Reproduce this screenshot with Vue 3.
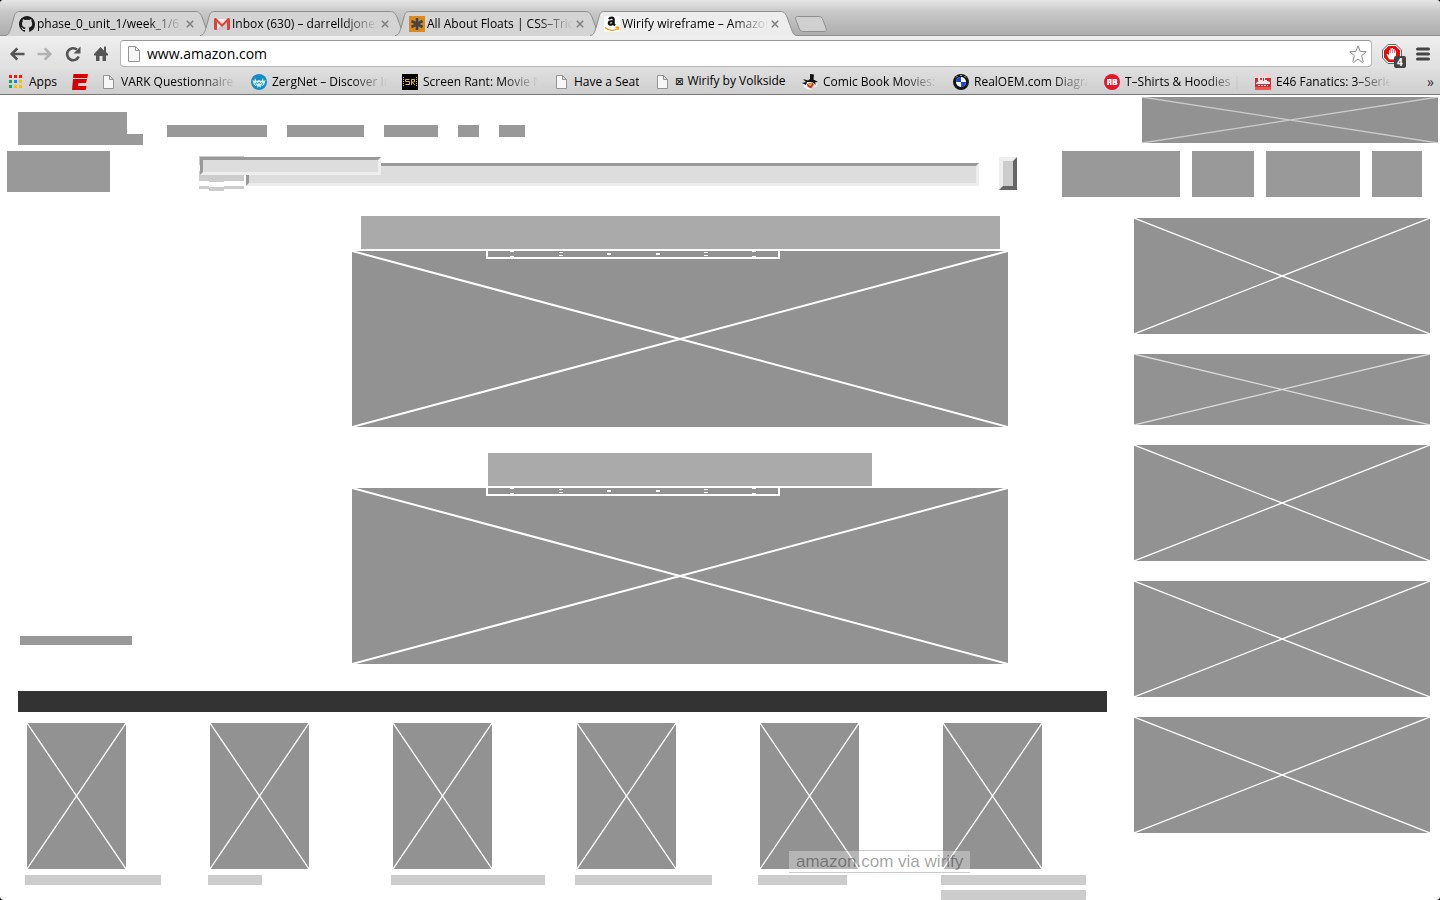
<script setup>
import { ref } from 'vue'

const tabs = [
  { icon: 'github', title: 'phase_0_unit_1/week_1/6_' },
  { icon: 'gmail', title: 'Inbox (630) – darrelldjones' },
  { icon: 'css', title: 'All About Floats | CSS–Tric' },
  { icon: 'amazon', title: 'Wirify wireframe – Amazon', active: true },
]

const bookmarks = [
  { icon: 'apps', title: 'Apps', width: 28 },
  { icon: 'espn', title: '', width: 0 },
  { icon: 'page', title: 'VARK Questionnaire', width: 115, fade: true },
  { icon: 'zerg', title: 'ZergNet – Discover In', width: 115, fade: true },
  { icon: 'sr', title: 'Screen Rant: Movie N', width: 115, fade: true },
  { icon: 'page', title: 'Have a Seat', width: 65 },
  { icon: 'page', title: 'Wirify by Volkside', width: 112, boxed: true },
  { icon: 'comic', title: 'Comic Book Movies:', width: 115, fade: true },
  { icon: 'bmw', title: 'RealOEM.com Diagra', width: 115, fade: true },
  { icon: 'rb', title: 'T–Shirts & Hoodies |', width: 115, fade: true },
  { icon: 'e46', title: 'E46 Fanatics: 3–Serie', width: 115, fade: true },
]

const url = ref('www.amazon.com')
const query = ref('')
const department = ref('')

const navLinks = [100, 77, 54, 21, 26]
const accountLinks = [118, 62, 94, 50]
const pagerDots = [25, 74, 122, 171, 219, 267]
const heroes = [
  { banner: 'wide' },
  { banner: 'narrow' },
]
const products = [
  [136],
  [54],
  [154],
  [137],
  [89],
  [145, 145],
]
const ads = ['tall', 'short', 'tall', 'tall', 'tall']
</script>

<template>
  <div class="window">
    <header class="chrome">
      <div class="tabstrip" role="tablist">
        <button
          v-for="t in tabs"
          :key="t.title"
          class="tab"
          :class="{ active: t.active }"
          role="tab"
          :aria-selected="!!t.active"
        >
          <svg class="tab-shape" viewBox="0 0 207 25" aria-hidden="true">
            <path class="tab-fill" d="M0 25C4 24 4 22 6 17L9 6C10 2 11 .5 15 .5H190C194 .5 195 2 197 6L201 17C203 22 203 24 207 25Z" />
            <path class="tab-line" d="M0 24.5C4 24 4 22 6 17L9 6C10 2 11 .5 15 .5H190C194 .5 195 2 197 6L201 17C203 22 203 24 207 24.5" />
          </svg>
          <svg v-if="t.icon === 'github'" class="icon" viewBox="0 0 16 16">
            <path fill="#1b1b1b" d="M8 0C3.600 0 0 3.600 0 8.100c0 3.600 2.300 6.600 5.500 7.700.4.100.5-.2.500-.4v-1.500c-2.200.5-2.700-1-2.700-1-.4-.9-.9-1.200-.9-1.200-.7-.5.100-.5.100-.5.800.1 1.200.8 1.200.8.700 1.300 1.900.9 2.400.7.100-.5.300-.9.500-1.100C4.800 11.400 3 10.700 3 7.600c0-.9.300-1.600.8-2.200-.1-.2-.4-1 .1-2.100 0 0 .7-.2 2.200.8a7.600 7.600 0 0 1 4 0c1.500-1 2.200-.8 2.200-.8.4 1.100.2 1.900.1 2.100.5.600.8 1.300.8 2.200 0 3.100-1.900 3.800-3.700 4 .3.200.6.700.6 1.500v2.300c0 .2.100.5.500.4A8.100 8.100 0 0 0 16 8.100C16 3.600 12.400 0 8 0Z" />
          </svg>
          <svg v-else-if="t.icon === 'gmail'" class="icon" viewBox="0 0 16 16">
            <path fill="#eee" d="M1 3h14v11H1z" />
            <path fill="#ccc" d="M3 14 8 8l5 6zM13 5v9l-4-5z" />
            <path fill="#d9453a" d="M1 2h1l6 6 6-6h1l1 1v10l-1 1h-2V6L8 11 3 6v8H1l-1-1V3z" />
          </svg>
          <svg v-else-if="t.icon === 'css'" class="icon" viewBox="0 0 16 16">
            <path fill="#dc8a1d" d="M0 0h16v16H0z" />
            <path stroke="#444" stroke-width="2.600" d="M8 2v12M2.500 5l11 6M13.500 5l-11 6" />
          </svg>
          <svg v-else class="icon" viewBox="0 0 16 16">
            <rect width="16" height="16" rx="2" fill="#fff" />
            <path fill="none" stroke="#111" stroke-width="2.200" d="M5 3.300C6 1 10 1 9.700 3.600V8L11 9.500M9.500 5C6 4.800 4.800 5.800 4.800 7.200c0 2.200 4 2 4.800-.5" />
            <path fill="none" stroke="#f90" stroke-width="1.500" d="M1 11.500c4 3.600 9 3.600 12.500 1M11.500 11.300c3-.8 3.500 0 2.200 2.600" />
          </svg>
          <span class="tab-title fade">{{ t.title }}</span>
          <svg class="close" viewBox="0 0 8 8"><path d="M.8.8l6.400 6.400M7.200.8.8 7.200" /></svg>
        </button>
        <button class="new-tab" aria-label="New tab">
          <svg viewBox="0 0 34 16"><path d="M3.500.5H24C27 .5 28 1 29 4l3 8c.8 2 0 3.500-2 3.500H10C7 15.500 6 15 5 12L2 4C1 2 1.500.5 3.500.5Z" /></svg>
        </button>
      </div>

      <div class="toolbar">
        <button class="tool" aria-label="Back">
          <svg viewBox="0 0 16 16"><path class="stroke" d="M15.500 8H4M8.300 2.300 2.700 8l5.600 5.700" /></svg>
        </button>
        <button class="tool pale" aria-label="Forward">
          <svg viewBox="0 0 16 16"><path class="stroke" d="M.5 8H12M7.700 2.300 13.300 8l-5.600 5.700" /></svg>
        </button>
        <button class="tool" aria-label="Reload">
          <svg viewBox="0 0 16 16"><path class="stroke" d="M13.700 10.500A6 6 0 1 1 12 3.600" /><path class="solid" d="M15.500.5v7H8.500z" /></svg>
        </button>
        <button class="tool" aria-label="Home">
          <svg viewBox="0 0 16 16"><path class="solid" d="M7.500 1 1 8v1.500h2V15h3.500v-5h3v5H13V9.500h2V8l-2-2V.5h-2v4z" /></svg>
        </button>
        <div class="omnibox">
          <svg class="doc" viewBox="0 0 12 16"><path d="M.5.500h7l4 4v11H.5zM7.500.500v4h4" /></svg>
          <input v-model="url" aria-label="Address" class="address" type="text" />
          <svg class="star" viewBox="0 0 18 18"><path d="m9 .8 2.200 5.600 6 .4-4.600 3.900 1.600 6c-.2.800-.9.800-1.500.3L9 14l-3.700 3c-.6.500-1.300.5-1.500-.3l1.600-6L.8 6.800l6-.4z" /></svg>
        </div>
        <button class="blocker" aria-label="Blocked items">
          <svg viewBox="0 0 26 26">
            <path fill="#fff" stroke="#666" d="M7 1.500h8l5.500 5.500v8L15 20.500H7L1.500 15V7z" />
            <path fill="#e40b0b" d="M7.500 3h7L19 7.500v7L14.500 19h-7L3 14.500v-7z" />
            <path fill="#fff" d="M8 16 5.500 11.500l1-.8L8 12V7h1.500V5.500H11V5h1v1h1.500v1.500H15V13l-1.500 3.500h-5z" />
            <path stroke="#e40b0b" stroke-width=".5" d="M9.500 7v3M11.500 6v4M13.500 7v3" />
            <rect x="13" y="13" width="12" height="12" rx="2" fill="#444" />
            <text x="16" y="23" fill="#fff" font-size="10" font-weight="700">4</text>
          </svg>
        </button>
        <button class="menu" aria-label="Menu">
          <svg viewBox="0 0 14 14"><path d="M1.500 2h11M1.500 7h11M1.500 12h11" /></svg>
        </button>
      </div>

      <nav class="bookmarks" aria-label="Bookmarks">
        <a v-for="b in bookmarks" :key="b.icon + b.title" href="#" class="bookmark" :class="b.icon">
          <svg v-if="b.icon === 'apps'" class="icon" viewBox="0 0 16 16">
            <path fill="#f31414" d="M1 1h3v3H1zM6 1h3v3H6zM11 1h3v3h-3z" />
            <path fill="#0ca65a" d="M1 6h3v3H1zM1 11h3v3H1z" />
            <path fill="#1483f5" d="M6 6h3v3H6z" />
            <path fill="#fb0" d="M11 6h3v3h-3zM6 11h3v3H6zM11 11h3v3h-3z" />
          </svg>
          <svg v-else-if="b.icon === 'espn'" class="icon" viewBox="0 0 16 16">
            <path fill="#d60000" d="M1.500 0H16l-.7 4H1zM1 5h14l-1 4H6.500L6 12h8.500l-.7 4H0z" />
          </svg>
          <svg v-else-if="b.icon === 'page'" class="icon doc-icon" viewBox="0 0 16 16"><path d="M3.500 1.500h6l4 4v9h-10zM9.500 1.500v4h4" /></svg>
          <svg v-else-if="b.icon === 'zerg'" class="icon" viewBox="0 0 16 16">
            <circle cx="8" cy="8" r="8" fill="#168cca" />
            <path fill="#d9f1fb" d="m1.500 6 2 1 .5-3 1.500 3L8 6l2.500 1L12 4l.5 3 2-1-1 4-2 2-1.500-1-.5 3L8 12l-1.500 2-.5-3-1.500 1-2-2z" />
            <path fill="none" stroke="#168cca" stroke-width=".8" d="m5 8 1.500 2L8 8l1.500 2L11 8M4 9l1 2M12 9l-1 2" />
          </svg>
          <svg v-else-if="b.icon === 'sr'" class="icon" viewBox="0 0 16 16">
            <path d="M0 0h16v16H0z" />
            <path fill="none" stroke="#e0b33c" d="M7.500 5.500h-4v2h4v3h-4M9.500 11V5.500h3v2.500h-3l3.500 3" />
            <path stroke="#e0b33c" stroke-dasharray="1 1" d="M1.500 3v10M14.500 3v10" />
          </svg>
          <svg v-else-if="b.icon === 'comic'" class="icon" viewBox="0 0 16 16">
            <path fill="#f2f2f2" d="m1 9 4-2 7 0 4 2-2 4-3-1-2 4-4-1-3-2z" />
            <path fill="#111" d="m8 0 4 .5-.5 5L16 8l-3 .5 1 2.500-4-3-5 0-1 3L0 9l4-1-3-3 5 1.500L8 5z" />
            <path fill="#c42b20" d="m5 10 5-1.500 2 2-3 4-3.500-2z" />
            <path fill="#e5b931" d="m6 10 4-1-1 3-2-.5z" />
          </svg>
          <svg v-else-if="b.icon === 'bmw'" class="icon" viewBox="0 0 16 16">
            <circle cx="8" cy="8" r="8" fill="#161616" />
            <circle cx="8" cy="8" r="5" fill="#fff" />
            <path fill="#1745e8" d="M8 8V3a5 5 0 0 0-5 5zM8 8v5a5 5 0 0 0 5-5z" />
            <path fill="none" stroke="#aaa" d="M3 3.500 4.500 2M11.500 2 13 3.500M7 1.500h2" />
          </svg>
          <svg v-else-if="b.icon === 'rb'" class="icon" viewBox="0 0 16 16">
            <circle cx="8" cy="8" r="8" fill="#e5152a" />
            <path fill="#fff" d="M3 5h4.500v6H3zM8.500 5h4l.8 1.500-.5 1.500.7 1.500-1 1.500h-4z" />
            <path fill="#e5152a" d="M5 6.500h1v1H5zM5 9h1v2H5zM10.300 6.300h1v1h-1zM10.300 9h1v1h-1z" />
          </svg>
          <svg v-else class="icon" viewBox="0 0 16 16">
            <path fill="#f1d5d5" d="M0 0h16v4H0z" /><path fill="#c82f36" d="M0 4h16v9H0z" /><path fill="#ef5558" d="M0 13h16v3H0z" />
            <path fill="#f3e6e6" d="m1 9 3-2h8l3 1v2H1zM3 3h2v3h2V3h1v4H3zM9 3h3v1h-2v2h2v1H9z" />
            <path stroke="#eee" stroke-dasharray="2 1" d="M3 11.500h10" />
          </svg>
          <span v-if="b.title" class="bm-title" :class="{ fade: b.fade }" :style="{ width: b.width + 'px' }"><span v-if="b.boxed" class="glyph">⊠</span>{{ b.title }}</span>
        </a>
        <button class="more" aria-label="More bookmarks">»</button>
      </nav>
    </header>

    <div class="content">
      <div class="top-row">
        <div class="logo"><div class="logo-main"></div><div class="logo-sub"></div></div>
        <nav class="links"><div v-for="w in navLinks" :key="w" class="block" :style="{ width: w + 'px' }"></div></nav>
        <svg class="cross promo" viewBox="0 0 100 100" preserveAspectRatio="none"><path d="M0 0 100 100M0 100 100 0" /></svg>
      </div>

      <div class="search-row">
        <div class="departments block"></div>
        <form class="search" @submit.prevent>
          <div class="fields">
            <svg class="scope" viewBox="0 0 45 35"><path d="M0 0h45v9H0zM0 15h45v10H25v1H10v-1H0zM0 30h10v1h15v-1h20v3H25v2H10v-2H0z" /></svg>
            <input v-model="query" class="field query" type="text" aria-label="Search" />
            <input v-model="department" class="field department" type="text" aria-label="Department" />
          </div>
          <button class="go" aria-label="Go"></button>
        </form>
        <nav class="account"><div v-for="w in accountLinks" :key="w" class="block" :style="{ width: w + 'px' }"></div></nav>
      </div>

      <div class="body">
        <main class="main">
          <div class="feature">
            <div class="feature-left"><div class="note block"></div></div>
            <div class="heroes">
              <section v-for="h in heroes" :key="h.banner" class="hero">
                <div class="banner" :class="h.banner"></div>
                <div class="hero-image">
                  <svg class="cross" viewBox="0 0 100 100" preserveAspectRatio="none"><path d="M0 0 100 100M0 100 100 0" /></svg>
                  <svg class="pager" viewBox="0 0 294 8">
                    <path fill="none" stroke="#fff" stroke-width="2" d="M1 0v7h292V0" />
                    <g fill="#fff">
                      <template v-for="(x, i) in pagerDots" :key="x">
                        <template v-if="i === 0 || i === 5"><rect :x="x - 1" y="0" width="4" height="1" /><rect :x="x - 1" y="5" width="4" height="1" /></template>
                        <template v-else-if="i === 1 || i === 4"><rect :x="x - 1" y="1" width="4" height="1" /><rect :x="x - 1" y="4" width="4" height="1" /></template>
                        <rect v-else :x="x - 1" y="2" width="4" height="2" />
                      </template>
                    </g>
                  </svg>
                </div>
              </section>
            </div>
          </div>
          <div class="heading-bar"></div>
          <div class="products">
            <article v-for="(labels, i) in products" :key="i" class="product">
              <svg class="cross" viewBox="0 0 100 100" preserveAspectRatio="none"><path d="M0 0 100 100M0 100 100 0" /></svg>
              <div v-for="(w, j) in labels" :key="j" class="label" :style="{ width: w + 'px' }"></div>
            </article>
          </div>
        </main>
        <aside class="ads">
          <svg v-for="(a, i) in ads" :key="i" class="cross" :class="a" viewBox="0 0 100 100" preserveAspectRatio="none"><path d="M0 0 100 100M0 100 100 0" /></svg>
        </aside>
      </div>
      <div class="credit">amazon.com via wirify</div>
    </div>
  </div>
</template>

<style>
body { margin: 0; background: #111; }
</style>

<style scoped>
* { box-sizing: border-box; }
svg { display: block; flex: none; }
button { border: 0; padding: 0; background: none; font: inherit; color: inherit; }
.window {
  height: 100vh; display: flex; flex-direction: column; overflow: hidden;
  border-radius: 4px; background: #fff; position: relative;
  font: 12px/16px "Open Sans", "Noto Sans", sans-serif; color: #000;
}
.chrome { flex: none; }
.tabstrip {
  display: flex; height: 36px; padding: 11px 0 0 5px;
  background: linear-gradient(#e6e6e6, #cacaca 11px, #adadad 35px); border-bottom: 1px solid #929292;
}
.tab { position: relative; display: flex; align-items: center; width: 207px; height: 25px; padding-left: 14px; margin-right: -12px; text-align: left; }
.tab.active { z-index: 1; }
.tab-shape { position: absolute; inset: 0; width: 207px; height: 25px; }
.tab-fill { fill: #d4d4d4; }
.tab-line { fill: none; stroke: #8e8e8e; }
.active .tab-fill { fill: #ededed; }
.icon { width: 16px; height: 16px; position: relative; }
.tab-title { position: relative; width: 146px; margin-left: 2px; white-space: nowrap; overflow: hidden; }
.fade { mask-image: linear-gradient(90deg, #000 calc(100% - 36px), transparent); }
.close { position: relative; width: 8px; height: 8px; margin-left: 3px; }
.close path { fill: none; stroke: #808080; stroke-width: 1.6; }
.new-tab { align-self: flex-start; margin: 5px 0 0 9px; }
.new-tab svg { width: 34px; height: 16px; }
.new-tab path { fill: #d0d0d0; stroke: #909090; }
.toolbar { display: flex; align-items: center; height: 33px; padding: 2px 10px 0 9px; background: linear-gradient(#efefef, #dfdfdf); }
.tool { margin-right: 12px; color: #555; }
.tool:nth-child(4) { margin-right: 11px; }
.tool svg { width: 16px; height: 16px; }
.tool.pale { color: #b2b2b2; }
.stroke { fill: none; stroke: currentColor; stroke-width: 2.6; }
.solid { fill: currentColor; }
.omnibox { flex: 1; display: flex; align-items: center; height: 27px; border: 1px solid #b5b5b5; border-top-color: #999; border-radius: 4px; background: #fff; padding: 0 4px 0 7px; }
.doc { width: 12px; height: 16px; }
.doc path, .doc-icon path { fill: #f7f7f7; stroke: #949494; }
.address { flex: 1; min-width: 0; border: 0; outline: 0; padding: 0; margin-left: 7px; background: none; font: 14px/20px "Open Sans", "Noto Sans", sans-serif; color: #000; }
.star { width: 18px; height: 18px; }
.star path { fill: #fff; stroke: #888; }
.blocker { margin: 4px 0 0 9px; }
.blocker svg { width: 26px; height: 26px; }
.menu { margin-left: 9px; }
.menu svg { width: 14px; height: 14px; }
.menu path { stroke: #444; stroke-width: 3; stroke-linecap: round; }
.bookmarks { display: flex; align-items: center; height: 26px; padding: 0 6px 0 8px; background: linear-gradient(#dfdfdf, #cecece); border-bottom: 1px solid #777; }
.bookmark { flex: none; display: flex; align-items: center; gap: 5px; margin-right: 15px; color: #000; text-decoration: none; }
.espn { margin-right: 12px; }
.bm-title { white-space: nowrap; overflow: hidden; }
.glyph { font: 10px/16px "DejaVu Sans", sans-serif; margin-right: 4px; }
.more { margin-left: auto; font-size: 14px; color: #333; }

.block { background: #999; }
.cross { width: 100%; background: #929292; }
.cross path { fill: none; stroke: #fff; stroke-width: 1.3; vector-effect: non-scaling-stroke; }
.content { flex: 1; min-height: 0; padding-top: 2px; }
.top-row { display: flex; height: 48px; padding: 0 2px 0 18px; }
.logo { margin-top: 15px; width: 125px; }
.logo-main { width: 109px; height: 22px; background: #999; }
.logo-sub { height: 11px; background: #999; }
.links { display: flex; gap: 20px; margin: 28px auto 0 24px; }
.links .block { height: 12px; }
.promo { width: 296px; height: 46px; }
.promo path { stroke: #ccc; }
.search-row { display: flex; padding: 6px 18px 0 7px; }
.departments { width: 103px; height: 41px; }
.search { flex: 1; display: flex; align-items: flex-start; margin: 5px 45px 0 89px; }
.fields { position: relative; flex: 1; height: 35px; margin-right: 20px; }
.scope { width: 45px; height: 35px; fill: #ccc; }
.field { position: absolute; padding: 0; outline: 0; background: #ddd; border: 3px solid; border-color: #999 #eee #eee #999; border-radius: 0; }
.query { left: 47px; top: 7px; width: calc(100% - 47px); height: 23px; }
.department { left: 1px; top: 1px; width: 181px; height: 18px; }
.go { width: 18px; height: 33px; margin-top: 1px; background: #ccc; border: 4px solid; border-color: #eee #666 #666 #eee; }
.account { display: flex; gap: 12px; }
.account .block { height: 46px; }
.body { display: flex; padding: 19px 10px 0 0; }
.main { flex: 1; min-width: 0; padding-right: 27px; }
.feature { display: flex; padding-right: 99px; }
.feature-left { width: 352px; padding: 420px 0 0 20px; }
.note { width: 112px; height: 9px; }
.heroes { flex: 1; display: flex; flex-direction: column; gap: 26px; }
.banner { height: 33px; margin: 0 auto 2px; background: #aaa; }
.wide { width: 639px; }
.narrow { width: 384px; }
.hero-image { position: relative; height: 176px; }
.hero-image .cross { height: 176px; }
.hero-image .cross path { stroke-width: 2; }
.hero-image .pager { position: absolute; left: 134px; top: 0; width: 294px; height: 8px; }
.heading-bar { height: 21px; margin: 27px 0 11px 18px; background: #333; }
.products { display: grid; grid-template-columns: repeat(6, 1fr); padding-left: 25px; margin-right: -17px; }
.product .cross { width: 99px; height: 146px; margin: 0 0 6px 2px; }
.label { height: 10px; margin-bottom: 5px; background: #ccc; }
.ads { width: 296px; display: flex; flex-direction: column; gap: 20px; padding-top: 2px; }
.tall { height: 116px; }
.short { height: 71px; }
.short path { stroke: #ddd; }
.credit {
  position: absolute; left: 789px; bottom: 27px; padding: 0 7px; white-space: nowrap;
  font: 17px/21px "Liberation Sans", Arial, sans-serif; color: rgba(0, 0, 0, .38);
  background: rgba(255, 255, 255, .32); border: solid rgba(0, 0, 0, .2); border-width: 1px 0;
}
</style>
